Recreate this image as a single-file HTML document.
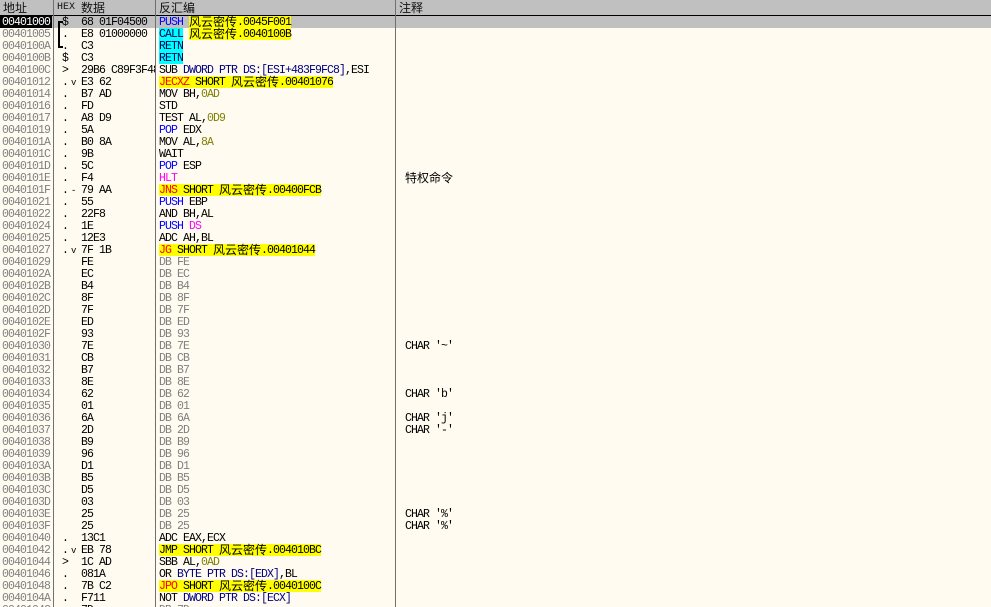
<!DOCTYPE html>
<html><head><meta charset="utf-8"><style>
html,body{margin:0;padding:0;width:991px;height:607px;overflow:hidden;background:#fffbf0}
body{position:relative;font:11.5px/14px "Liberation Mono","Noto Sans CJK SC",monospace;color:#000;letter-spacing:-.9px}
#h{position:absolute;left:0;top:0;width:991px;height:15px;background:#c0c0c0;border-bottom:1px solid #000}
#h span{position:absolute;top:1px;font:12px/13px "Noto Sans CJK SC",sans-serif;letter-spacing:0;color:#111}
#l{position:absolute;left:0;top:16px;width:991px}
.r{position:relative;height:12px;white-space:pre}
.r>*{position:absolute;top:0;font-style:normal;font-weight:normal;text-decoration:none;height:12px}
.a{left:0;width:50px;padding-left:2px;color:#808080}
.m{left:62px}
.m b{font-weight:normal;font-size:9px;margin-left:3px}
.x{left:81px;width:74px;overflow:hidden}
.d{left:159px}
.c{left:405px}
s{text-decoration:none;color:#808080}
.y,.q{display:inline-block;height:12px;line-height:14px;vertical-align:top}
.y{background:#ff0}.q{background:#0ff;color:#000060}
.e{color:#f00}.p{color:#00f}.h{color:#f0f}.n{color:#000080}.o{color:#808000}
em{display:inline-block;height:12px;vertical-align:top;font:12px/12px "Noto Sans CJK SC",sans-serif;font-style:normal;letter-spacing:0}
.v{position:absolute;top:0;width:1px;height:607px;background:#707070}
.sel{background:#c0c0c0}.sel .a{background:#000;color:#fff}
#b1{position:absolute;left:58px;top:21px;width:3px;height:23px;border:solid #000;border-width:2px 0 2px 2px}
</style></head><body>
<div id="h"><span style="left:3px">地址</span><span style="left:57px;font:10px/13px 'Liberation Mono',monospace">HEX</span><span style="left:81px">数据</span><span style="left:159px">反汇编</span><span style="left:399px">注释</span></div>
<div id="l">
<div class="r sel"><i class="a">00401000</i><i class="m">$</i><i class="x">68 01F04500</i><i class="d"><span class="p">PUSH</span> <span class="y"><em>风云密传</em>.0045F001</span></i></div>
<div class="r"><i class="a">00401005</i><i class="m">.</i><i class="x">E8 01000000</i><i class="d"><span class="q">CALL</span> <span class="y"><em>风云密传</em>.0040100B</span></i></div>
<div class="r"><i class="a">0040100A</i><i class="m">.</i><i class="x">C3</i><i class="d"><span class="q">RETN</span></i></div>
<div class="r"><i class="a">0040100B</i><i class="m">$</i><i class="x">C3</i><i class="d"><span class="q">RETN</span></i></div>
<div class="r"><i class="a">0040100C</i><i class="m">&gt;</i><i class="x">29B6 C89F3F48</i><i class="d">SUB <span class="n">DWORD PTR DS:[ESI+483F9FC8]</span>,ESI</i></div>
<div class="r"><i class="a">00401012</i><i class="m">.<b>v</b></i><i class="x">E3 62</i><i class="d"><span class="y"><span class="e">JECXZ</span> SHORT <em>风云密传</em>.00401076</span></i></div>
<div class="r"><i class="a">00401014</i><i class="m">.</i><i class="x">B7 AD</i><i class="d">MOV BH,<span class="o">0AD</span></i></div>
<div class="r"><i class="a">00401016</i><i class="m">.</i><i class="x">FD</i><i class="d">STD</i></div>
<div class="r"><i class="a">00401017</i><i class="m">.</i><i class="x">A8 D9</i><i class="d">TEST AL,<span class="o">0D9</span></i></div>
<div class="r"><i class="a">00401019</i><i class="m">.</i><i class="x">5A</i><i class="d"><span class="p">POP</span> EDX</i></div>
<div class="r"><i class="a">0040101A</i><i class="m">.</i><i class="x">B0 8A</i><i class="d">MOV AL,<span class="o">8A</span></i></div>
<div class="r"><i class="a">0040101C</i><i class="m">.</i><i class="x">9B</i><i class="d">WAIT</i></div>
<div class="r"><i class="a">0040101D</i><i class="m">.</i><i class="x">5C</i><i class="d"><span class="p">POP</span> ESP</i></div>
<div class="r"><i class="a">0040101E</i><i class="m">.</i><i class="x">F4</i><i class="d"><span class="h">HLT</span></i><i class="c"><em>特权命令</em></i></div>
<div class="r"><i class="a">0040101F</i><i class="m">.<b>-</b></i><i class="x">79 AA</i><i class="d"><span class="y"><span class="e">JNS</span> SHORT <em>风云密传</em>.00400FCB</span></i></div>
<div class="r"><i class="a">00401021</i><i class="m">.</i><i class="x">55</i><i class="d"><span class="p">PUSH</span> EBP</i></div>
<div class="r"><i class="a">00401022</i><i class="m">.</i><i class="x">22F8</i><i class="d">AND BH,AL</i></div>
<div class="r"><i class="a">00401024</i><i class="m">.</i><i class="x">1E</i><i class="d"><span class="p">PUSH</span> <span class="h">DS</span></i></div>
<div class="r"><i class="a">00401025</i><i class="m">.</i><i class="x">12E3</i><i class="d">ADC AH,BL</i></div>
<div class="r"><i class="a">00401027</i><i class="m">.<b>v</b></i><i class="x">7F 1B</i><i class="d"><span class="y"><span class="e">JG</span> SHORT <em>风云密传</em>.00401044</span></i></div>
<div class="r"><i class="a">00401029</i><i class="x">FE</i><i class="d"><s>DB FE</s></i></div>
<div class="r"><i class="a">0040102A</i><i class="x">EC</i><i class="d"><s>DB EC</s></i></div>
<div class="r"><i class="a">0040102B</i><i class="x">B4</i><i class="d"><s>DB B4</s></i></div>
<div class="r"><i class="a">0040102C</i><i class="x">8F</i><i class="d"><s>DB 8F</s></i></div>
<div class="r"><i class="a">0040102D</i><i class="x">7F</i><i class="d"><s>DB 7F</s></i></div>
<div class="r"><i class="a">0040102E</i><i class="x">ED</i><i class="d"><s>DB ED</s></i></div>
<div class="r"><i class="a">0040102F</i><i class="x">93</i><i class="d"><s>DB 93</s></i></div>
<div class="r"><i class="a">00401030</i><i class="x">7E</i><i class="d"><s>DB 7E</s></i><i class="c">CHAR '~'</i></div>
<div class="r"><i class="a">00401031</i><i class="x">CB</i><i class="d"><s>DB CB</s></i></div>
<div class="r"><i class="a">00401032</i><i class="x">B7</i><i class="d"><s>DB B7</s></i></div>
<div class="r"><i class="a">00401033</i><i class="x">8E</i><i class="d"><s>DB 8E</s></i></div>
<div class="r"><i class="a">00401034</i><i class="x">62</i><i class="d"><s>DB 62</s></i><i class="c">CHAR 'b'</i></div>
<div class="r"><i class="a">00401035</i><i class="x">01</i><i class="d"><s>DB 01</s></i></div>
<div class="r"><i class="a">00401036</i><i class="x">6A</i><i class="d"><s>DB 6A</s></i><i class="c">CHAR 'j'</i></div>
<div class="r"><i class="a">00401037</i><i class="x">2D</i><i class="d"><s>DB 2D</s></i><i class="c">CHAR '-'</i></div>
<div class="r"><i class="a">00401038</i><i class="x">B9</i><i class="d"><s>DB B9</s></i></div>
<div class="r"><i class="a">00401039</i><i class="x">96</i><i class="d"><s>DB 96</s></i></div>
<div class="r"><i class="a">0040103A</i><i class="x">D1</i><i class="d"><s>DB D1</s></i></div>
<div class="r"><i class="a">0040103B</i><i class="x">B5</i><i class="d"><s>DB B5</s></i></div>
<div class="r"><i class="a">0040103C</i><i class="x">D5</i><i class="d"><s>DB D5</s></i></div>
<div class="r"><i class="a">0040103D</i><i class="x">03</i><i class="d"><s>DB 03</s></i></div>
<div class="r"><i class="a">0040103E</i><i class="x">25</i><i class="d"><s>DB 25</s></i><i class="c">CHAR '%'</i></div>
<div class="r"><i class="a">0040103F</i><i class="x">25</i><i class="d"><s>DB 25</s></i><i class="c">CHAR '%'</i></div>
<div class="r"><i class="a">00401040</i><i class="m">.</i><i class="x">13C1</i><i class="d">ADC EAX,ECX</i></div>
<div class="r"><i class="a">00401042</i><i class="m">.<b>v</b></i><i class="x">EB 78</i><i class="d"><span class="y">JMP SHORT <em>风云密传</em>.004010BC</span></i></div>
<div class="r"><i class="a">00401044</i><i class="m">&gt;</i><i class="x">1C AD</i><i class="d">SBB AL,<span class="o">0AD</span></i></div>
<div class="r"><i class="a">00401046</i><i class="m">.</i><i class="x">081A</i><i class="d">OR <span class="n">BYTE PTR DS:[EDX]</span>,BL</i></div>
<div class="r"><i class="a">00401048</i><i class="m">.</i><i class="x">7B C2</i><i class="d"><span class="y"><span class="e">JPO</span> SHORT <em>风云密传</em>.0040100C</span></i></div>
<div class="r"><i class="a">0040104A</i><i class="m">.</i><i class="x">F711</i><i class="d">NOT <span class="n">DWORD PTR DS:[ECX]</span></i></div>
<div class="r"><i class="a">0040104C</i><i class="x">7D</i><i class="d"><s>DB 7D</s></i></div>
</div>
<div class="v" style="left:53px"></div><div class="v" style="left:155px"></div><div class="v" style="left:395px"></div>
<div id="b1"></div>
</body></html>
